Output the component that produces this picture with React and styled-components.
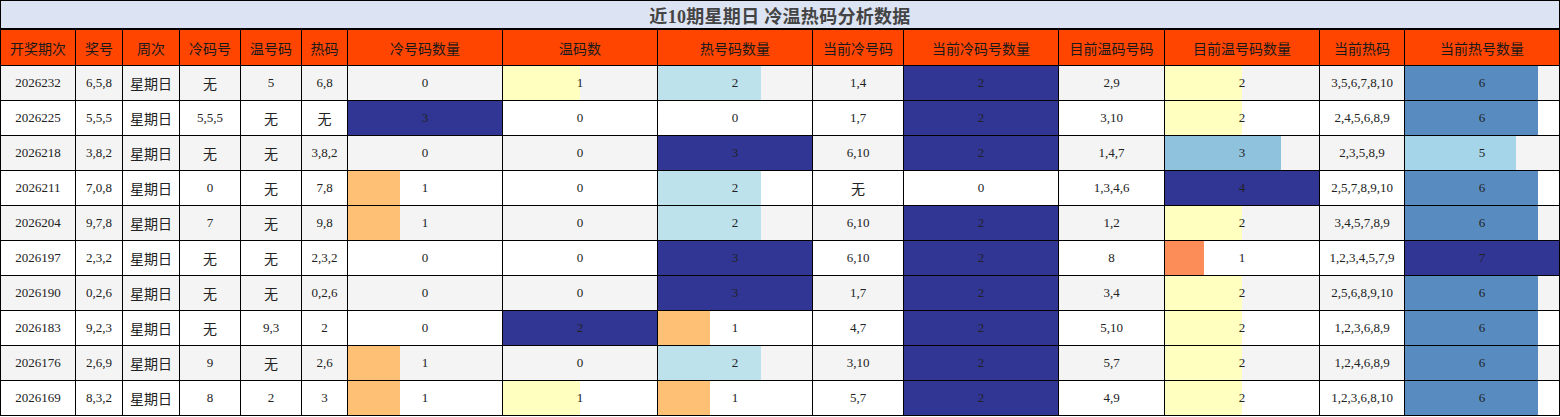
import React from 'react';
import styled, { createGlobalStyle } from 'styled-components';

const GlobalStyle = createGlobalStyle`
    body {
        margin: 0;
        background: #fff;
    }
`

const Table = styled.table`
    width: 1560px;
    border-collapse: collapse;
    table-layout: fixed;
    font-family: "Liberation Serif", "Noto Sans CJK SC", serif;
    color: #222;
`

const TitleCell = styled.th`
    height: 27px;
    padding: 0;
    background: #dce3f2;
    border: 1px solid #000;
    border-bottom: 2px solid #000;
    font-family: "Liberation Serif", "Noto Sans CJK SC", serif;
    font-size: 18px;
    font-weight: bold;
    color: #444;
    letter-spacing: 0.3px;
`

const HeadCell = styled.th`
    height: 35px;
    padding: 0;
    background: #ff4500;
    border: 1px solid #000;
    font-family: "Noto Sans CJK SC", sans-serif;
    font-size: 14px;
    font-weight: normal;
    color: #1a1a1a;
    white-space: nowrap;
`

const Row = styled.tr`
    background: ${p => (p.$alt ? '#f4f4f4' : '#ffffff')};
`

const Cell = styled.td`
    height: 34px;
    padding: 0;
    border: 1px solid #000;
    text-align: center;
    font-family: ${p => (p.$cjk ? '"Noto Sans CJK SC", sans-serif' : '"Liberation Serif", serif')};
    font-size: ${p => (p.$cjk ? '14px' : '13px')};
    white-space: nowrap;
`

const BarCell = styled(Cell)`
    background-image: linear-gradient(
        to right,
        ${p => p.$color} 0,
        ${p => p.$color} ${p => p.$pct}%,
        transparent ${p => p.$pct}%
    );
    background-origin: border-box;
`

const NAVY = '#313695';

const widths = [75, 47, 57, 61, 61, 46, 155, 155, 155, 91, 155, 106, 155, 85, 155];

const headers = [
    '开奖期次', '奖号', '周次', '冷码号', '温号码', '热码', '冷号码数量', '温码数',
    '热号码数量', '当前冷号码', '当前冷码号数量', '目前温码号码', '目前温号码数量',
    '当前热码', '当前热号数量'
];

// bar columns: index -> max and colour by value
const bars = {
    6: { max: 3, colors: { 1: '#fec074', 3: NAVY } },
    7: { max: 2, colors: { 1: '#ffffc0', 2: NAVY } },
    8: { max: 3, colors: { 1: '#fec074', 2: '#bee2ec', 3: NAVY } },
    10: { max: 2, colors: { 2: NAVY } },
    12: { max: 4, colors: { 1: '#fc8d59', 2: '#ffffc0', 3: '#8fc2dd', 4: NAVY } },
    14: { max: 7, colors: { 5: '#a5d5e8', 6: '#588bc0', 7: NAVY } },
};

const rows = [
    ['2026232', '6,5,8', '星期日', '无', '5', '6,8', 0, 1, 2, '1,4', 2, '2,9', 2, '3,5,6,7,8,10', 6],
    ['2026225', '5,5,5', '星期日', '5,5,5', '无', '无', 3, 0, 0, '1,7', 2, '3,10', 2, '2,4,5,6,8,9', 6],
    ['2026218', '3,8,2', '星期日', '无', '无', '3,8,2', 0, 0, 3, '6,10', 2, '1,4,7', 3, '2,3,5,8,9', 5],
    ['2026211', '7,0,8', '星期日', '0', '无', '7,8', 1, 0, 2, '无', 0, '1,3,4,6', 4, '2,5,7,8,9,10', 6],
    ['2026204', '9,7,8', '星期日', '7', '无', '9,8', 1, 0, 2, '6,10', 2, '1,2', 2, '3,4,5,7,8,9', 6],
    ['2026197', '2,3,2', '星期日', '无', '无', '2,3,2', 0, 0, 3, '6,10', 2, '8', 1, '1,2,3,4,5,7,9', 7],
    ['2026190', '0,2,6', '星期日', '无', '无', '0,2,6', 0, 0, 3, '1,7', 2, '3,4', 2, '2,5,6,8,9,10', 6],
    ['2026183', '9,2,3', '星期日', '无', '9,3', '2', 0, 2, 1, '4,7', 2, '5,10', 2, '1,2,3,6,8,9', 6],
    ['2026176', '2,6,9', '星期日', '9', '无', '2,6', 1, 0, 2, '3,10', 2, '5,7', 2, '1,2,4,6,8,9', 6],
    ['2026169', '8,3,2', '星期日', '8', '2', '3', 1, 1, 1, '5,7', 2, '4,9', 2, '1,2,3,6,8,10', 6],
];

const isCjk = (v) => /[\u4e00-\u9fff]/.test(String(v));

const renderCell = (value, i) => {
    const bar = bars[i];
    if (bar && value > 0) {
        return (
            <BarCell key={i} $pct={(value / bar.max) * 100} $color={bar.colors[value]}>
                {value}
            </BarCell>
        );
    }
    return <Cell key={i} $cjk={isCjk(value)}>{value}</Cell>;
};

const App = () => {
    return (
        <>
            <GlobalStyle />
            <Table>
                <colgroup>
                    {widths.map((w, i) => <col key={i} style={{ width: w }} />)}
                </colgroup>
                <thead>
                    <tr>
                        <TitleCell colSpan={15}>近10期星期日 冷温热码分析数据</TitleCell>
                    </tr>
                    <tr>
                        {headers.map(h => <HeadCell key={h}>{h}</HeadCell>)}
                    </tr>
                </thead>
                <tbody>
                    {rows.map((r, ri) => (
                        <Row key={r[0]} $alt={ri % 2 === 0}>
                            {r.map(renderCell)}
                        </Row>
                    ))}
                </tbody>
            </Table>
        </>
    );
};

export default App;
